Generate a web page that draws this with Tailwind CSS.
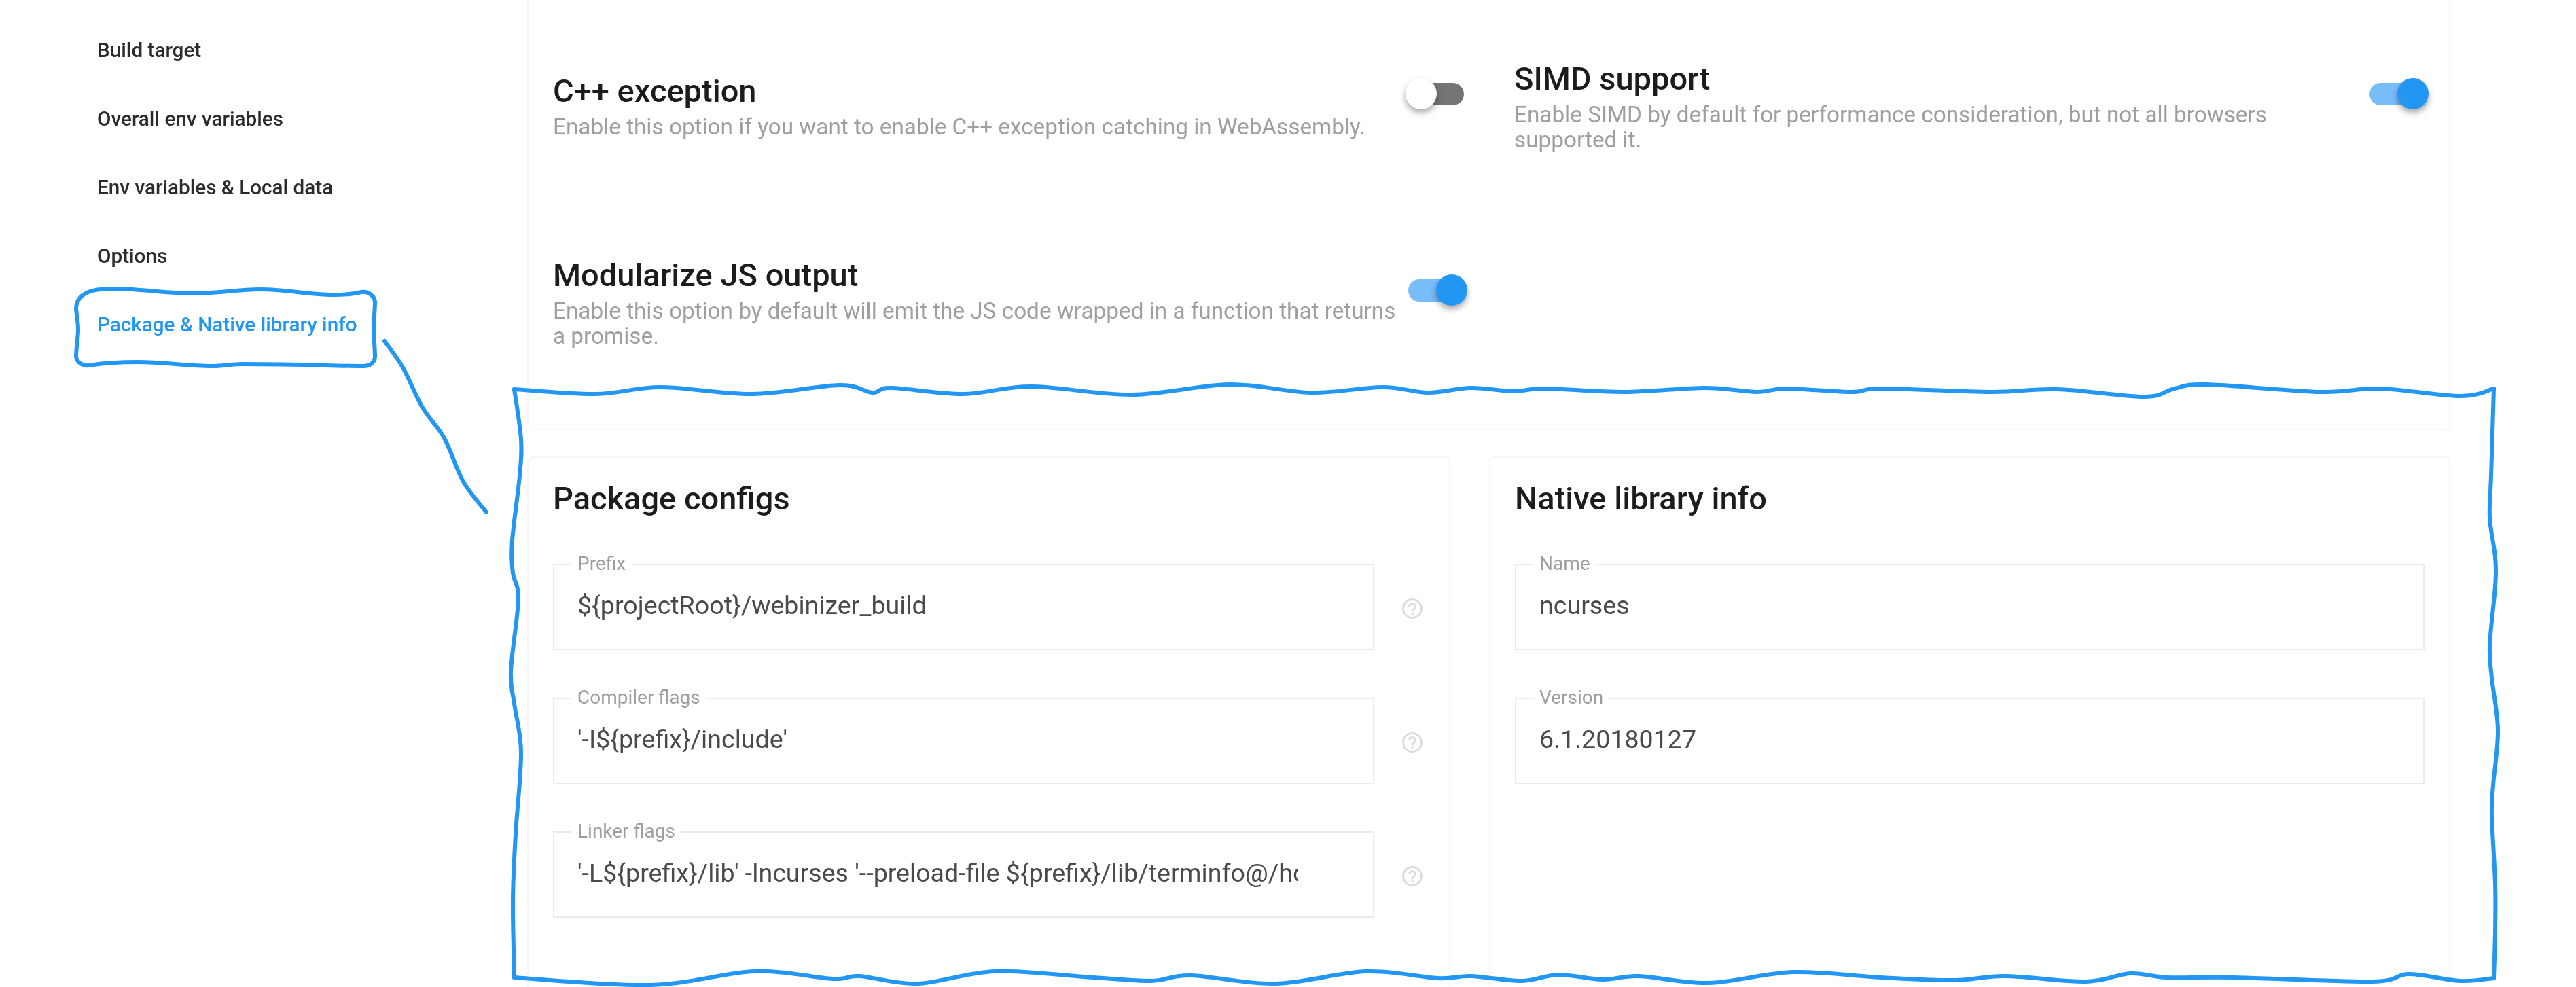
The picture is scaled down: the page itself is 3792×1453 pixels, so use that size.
<!DOCTYPE html>
<html>
<head>
<meta charset="utf-8">
<script src="https://cdn.jsdelivr.net/npm/@tailwindcss/browser@4"></script>
</head>
<body class="bg-white font-['Roboto',sans-serif]">
<div class="relative flex h-[1453px] w-[3792px] overflow-hidden bg-white blur-[0.6px]">
  <nav class="w-[776px] shrink-0 pl-[143px] pt-[24px] text-[29.7px] font-medium text-[#2b2b2b]">
    <div class="flex h-[101px] items-center">Build target</div>
    <div class="flex h-[101px] items-center">Overall env variables</div>
    <div class="flex h-[101px] items-center">Env variables &amp; Local data</div>
    <div class="flex h-[101px] items-center">Options</div>
    <div class="flex h-[101px] items-center text-[#2196f3]">Package &amp; Native library info</div>
  </nav>
  <main class="w-[2831px] shrink-0">
    <section class="grid h-[633px] grid-cols-2 auto-rows-[289px] gap-x-[69px] rounded-b-lg border-x-2 border-b-2 border-[#f7f7f7] pl-[36px] pr-[30px] pt-[13px]">
      <div class="flex items-center">
        <div class="mb-[4px] flex-1">
          <h3 class="mb-[6px] text-[47px] leading-[56px] font-medium text-[#1c1c1c]">C++ exception</h3>
          <p class="text-[33.3px] leading-[37px] text-[#9e9e9e]">Enable this option if you want to enable C++ exception catching in WebAssembly.</p>
        </div>
        <div class="relative mb-[40px] h-[46px] w-[91px] shrink-0">
          <div class="absolute left-[1px] top-[7px] h-[33px] w-[85px] rounded-full bg-[#757575]"></div>
          <div class="absolute left-0 top-0 h-[46px] w-[46px] rounded-full bg-white shadow-[0_5px_10px_rgba(0,0,0,0.35)]"></div>
        </div>
      </div>
      <div class="flex items-center">
        <div class="mb-[4px] flex-1">
          <h3 class="mb-[6px] text-[47px] leading-[56px] font-medium text-[#1c1c1c]">SIMD support</h3>
          <p class="text-[33.3px] leading-[37px] text-[#9e9e9e]">Enable SIMD by default for performance consideration, but not all browsers supported it.</p>
        </div>
        <div class="relative mb-[40px] h-[46px] w-[91px] shrink-0">
          <div class="absolute left-[4px] top-[7px] h-[33px] w-[85px] rounded-full bg-[#78bcf8]"></div>
          <div class="absolute right-0 top-0 h-[46px] w-[46px] rounded-full bg-[#2196f3] shadow-[0_5px_10px_rgba(0,0,0,0.35)]"></div>
        </div>
      </div>
      <div class="flex items-center">
        <div class="mb-[4px] flex-1">
          <h3 class="mb-[6px] text-[47px] leading-[56px] font-medium text-[#1c1c1c]">Modularize JS output</h3>
          <p class="text-[33.3px] leading-[37px] text-[#9e9e9e]">Enable this option by default will emit the JS code wrapped in a function that returns a promise.</p>
        </div>
        <div class="relative mb-[40px] h-[46px] w-[91px] shrink-0">
          <div class="absolute left-[4px] top-[7px] h-[33px] w-[85px] rounded-full bg-[#78bcf8]"></div>
          <div class="absolute right-0 top-0 h-[46px] w-[46px] rounded-full bg-[#2196f3] shadow-[0_5px_10px_rgba(0,0,0,0.35)]"></div>
        </div>
      </div>
    </section>
    <div class="mt-[39px] flex h-[800px] gap-[57px]">
      <section class="w-[1359px] shrink-0 rounded-t-lg border-x-2 border-t-2 border-[#f7f7f7] pl-[36px] pt-[32px]">
        <h2 class="text-[47px] leading-[56px] font-medium text-[#1c1c1c]">Package configs</h2>
        <div class="mt-[68px] flex flex-col gap-[70px]">
          <div class="flex items-center gap-[38px]">
            <div class="relative flex h-[127px] w-[1209px] shrink-0 items-center border-2 border-[#ebebeb] pl-[34px] pb-[4px]">
              <span class="absolute left-[25px] top-[-16px] bg-white px-[9px] text-[28px] leading-[28px] text-[#9e9e9e]">Prefix</span>
              <div class="w-[1060px] overflow-hidden whitespace-nowrap text-[37.6px] text-[#4a4a4a]">${projectRoot}/webinizer_build</div>
            </div>
            <svg class="mt-[4px] h-[36px] w-[36px] shrink-0" viewBox="0 0 24 24" fill="#dcdcdc"><path d="M11 18h2v-2h-2v2zm1-16C6.48 2 2 6.48 2 12s4.48 10 10 10 10-4.48 10-10S17.52 2 12 2zm0 18c-4.41 0-8-3.59-8-8s3.59-8 8-8 8 3.59 8 8-3.59 8-8 8zm0-14c-2.21 0-4 1.79-4 4h2c0-1.1.9-2 2-2s2 .9 2 2c0 2-3 1.75-3 5h2c0-2.25 3-2.5 3-5 0-2.21-1.79-4-4-4z"/></svg>
          </div>
          <div class="flex items-center gap-[38px]">
            <div class="relative flex h-[127px] w-[1209px] shrink-0 items-center border-2 border-[#ebebeb] pl-[34px] pb-[4px]">
              <span class="absolute left-[25px] top-[-16px] bg-white px-[9px] text-[28px] leading-[28px] text-[#9e9e9e]">Compiler flags</span>
              <div class="w-[1060px] overflow-hidden whitespace-nowrap text-[37.6px] text-[#4a4a4a]">'-I${prefix}/include'</div>
            </div>
            <svg class="mt-[4px] h-[36px] w-[36px] shrink-0" viewBox="0 0 24 24" fill="#dcdcdc"><path d="M11 18h2v-2h-2v2zm1-16C6.48 2 2 6.48 2 12s4.48 10 10 10 10-4.48 10-10S17.52 2 12 2zm0 18c-4.41 0-8-3.59-8-8s3.59-8 8-8 8 3.59 8 8-3.59 8-8 8zm0-14c-2.21 0-4 1.79-4 4h2c0-1.1.9-2 2-2s2 .9 2 2c0 2-3 1.75-3 5h2c0-2.25 3-2.5 3-5 0-2.21-1.79-4-4-4z"/></svg>
          </div>
          <div class="flex items-center gap-[38px]">
            <div class="relative flex h-[127px] w-[1209px] shrink-0 items-center border-2 border-[#ebebeb] pl-[34px] pb-[4px]">
              <span class="absolute left-[25px] top-[-16px] bg-white px-[9px] text-[28px] leading-[28px] text-[#9e9e9e]">Linker flags</span>
              <div class="w-[1060px] overflow-hidden whitespace-nowrap text-[37.6px] text-[#4a4a4a]">'-L${prefix}/lib' -lncurses '--preload-file ${prefix}/lib/terminfo@/home/terminfo'</div>
            </div>
            <svg class="mt-[4px] h-[36px] w-[36px] shrink-0" viewBox="0 0 24 24" fill="#dcdcdc"><path d="M11 18h2v-2h-2v2zm1-16C6.48 2 2 6.48 2 12s4.48 10 10 10 10-4.48 10-10S17.52 2 12 2zm0 18c-4.41 0-8-3.59-8-8s3.59-8 8-8 8 3.59 8 8-3.59 8-8 8zm0-14c-2.21 0-4 1.79-4 4h2c0-1.1.9-2 2-2s2 .9 2 2c0 2-3 1.75-3 5h2c0-2.25 3-2.5 3-5 0-2.21-1.79-4-4-4z"/></svg>
          </div>
        </div>
      </section>
      <section class="flex-1 rounded-t-lg border-x-2 border-t-2 border-[#f7f7f7] pl-[36px] pr-[36px] pt-[32px]">
        <h2 class="text-[47px] leading-[56px] font-medium text-[#1c1c1c]">Native library info</h2>
        <div class="mt-[68px] flex flex-col gap-[70px]">
          <div class="relative flex h-[127px] items-center border-2 border-[#ebebeb] pl-[34px] pb-[4px]">
            <span class="absolute left-[25px] top-[-16px] bg-white px-[9px] text-[28px] leading-[28px] text-[#9e9e9e]">Name</span>
            <div class="text-[37.6px] text-[#4a4a4a]">ncurses</div>
          </div>
          <div class="relative flex h-[127px] items-center border-2 border-[#ebebeb] pl-[34px] pb-[4px]">
            <span class="absolute left-[25px] top-[-16px] bg-white px-[9px] text-[28px] leading-[28px] text-[#9e9e9e]">Version</span>
            <div class="text-[37.6px] text-[#4a4a4a]">6.1.20180127</div>
          </div>
        </div>
      </section>
    </div>
  </main>
  <svg class="pointer-events-none absolute left-0 top-0 h-[1453px] w-[3792px]" viewBox="0 0 3792 1453" fill="none" stroke="#2196f3" stroke-width="6" stroke-linecap="round" stroke-linejoin="round">
    <path d="M532 430 C520 433 505 434 491 434 C455 434 420 426 383 426 C350 426 320 432 287 432 C245 432 205 425 166 425 C150 425 138 426 128 431 C117 436 112 444 112 455 C113 465 115 475 115 485 C115 498 112 512 112 525 C113 534 122 539 131 538 C155 534 180 533 204 533 C240 533 276 539 312 539 C327 539 342 536 357 536 C450 536 490 539 536 539 C546 538 552 533 552 525 C552 511 550 498 550 485 C550 471 552 458 552 444 C551 436 542 428 532 430"/>
    <path data-p="566,502 593,541 622,600 654,645 682,709 716,754"/>
    <path data-p="757,573 877,580 973,570 1107,580 1236,567 1284,578 1312,571 1418,580 1518,569 1666,581 1810,566 1930,578 2035,570 2102,578 2165,571 2229,576 2273,572 2391,577 2510,571 2586,577 2629,572 2726,577 2769,572 2931,577 3028,573 3157,584 3201,572 3249,566 3416,577 3503,572 3622,583 3671,572"/>
    <path data-p="3671,572 3667,700 3665,762 3673,820 3673,863 3665,950 3668,998 3677,1075 3670,1156 3668,1200 3673,1300 3673,1372 3671,1440"/>
    <path data-p="3671,1440 3621,1444 3546,1434 3492,1445 3287,1439 3190,1439 3136,1433 3071,1445 2952,1437 2877,1443 2769,1439 2640,1431 2515,1447 2413,1437 2359,1442 2294,1435 2240,1444 2165,1437 2116,1440 2011,1430 1877,1448 1753,1436 1695,1444 1609,1439 1465,1430 1351,1448 1265,1437 1226,1441 1111,1430 958,1450 757,1439"/>
    <path data-p="757,1439 755,1324 759,1228 767,1108 757,1036 752,988 763,882 755,844 754,796 765,700 767,647 757,573"/>
  </svg>
</div>
<script>
document.querySelectorAll('path[data-p]').forEach(function (el) {
  var p = el.getAttribute('data-p').split(' ').map(function (s) { return s.split(',').map(Number); });
  var d = 'M' + p[0].join(' ');
  for (var i = 0; i < p.length - 1; i++) {
    var a = p[i - 1] || p[i], b = p[i], c = p[i + 1], e = p[i + 2] || c;
    d += ' C' + (b[0] + (c[0] - a[0]) / 6) + ' ' + (b[1] + (c[1] - a[1]) / 6) + ' ' + (c[0] - (e[0] - b[0]) / 6) + ' ' + (c[1] - (e[1] - b[1]) / 6) + ' ' + c[0] + ' ' + c[1];
  }
  el.setAttribute('d', d);
});
</script>
</body>
</html>
